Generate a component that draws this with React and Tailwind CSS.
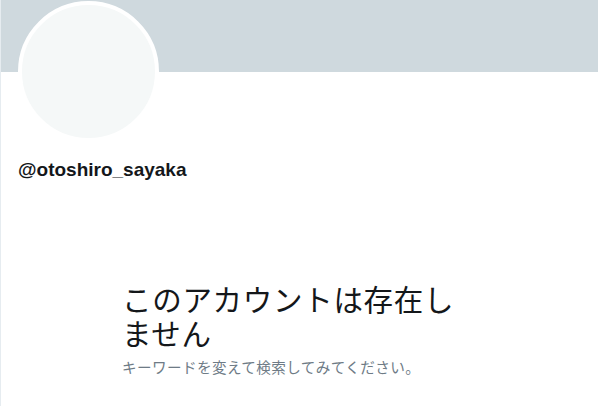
export default function App() {
  return (
    <div
      className="w-[598px] h-[406px] bg-white border-l border-[#e6ecf0] overflow-hidden flex flex-col"
      style={{ fontFamily: '"Liberation Sans", "Noto Sans CJK JP", sans-serif' }}
    >
      <div className="relative">
        <div className="h-[72px] bg-[#cfd9de]" />
        <div className="absolute left-[17px] top-[1px] w-[141px] h-[141px] rounded-full border-4 border-white bg-[#f5f8f8]" />
      </div>
      <div className="h-[86px]" />
      <div className="pl-[17px] text-[19px] leading-[24px] font-bold text-[#14171a]">@otoshiro_sayaka</div>
      <div className="flex-1 flex flex-col pl-[121px] pt-[99px]">
        <div
          className="w-[345px] text-[29.5px] leading-[34px] tracking-[0.7px] text-[#14171a]"
          style={{ fontFamily: '"Noto Sans CJK JP", sans-serif' }}
        >
          このアカウントは存在しません
        </div>
        <div
          className="mt-[8px] text-[14.6px] leading-[20px] tracking-[0.4px] text-[#6e7b86]"
          style={{ fontFamily: '"Noto Sans CJK JP", sans-serif' }}
        >
          キーワードを変えて検索してみてください。
        </div>
      </div>
    </div>
  );
}
